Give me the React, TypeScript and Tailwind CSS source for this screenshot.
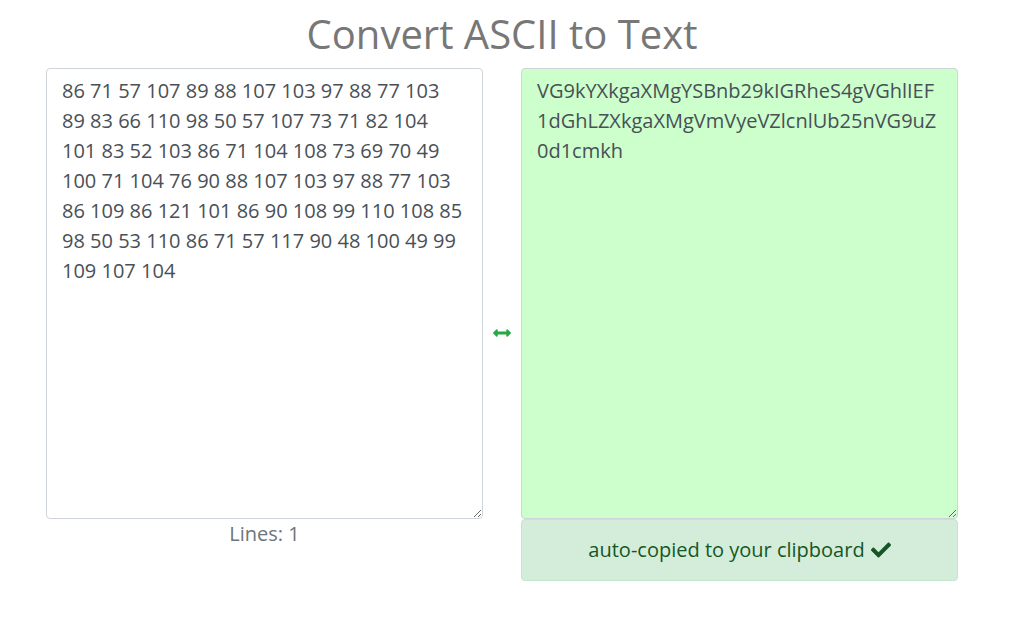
import { FaArrowsAltH, FaCheck } from "react-icons/fa"

const asciiText =
  "86 71 57 107 89 88 107 103 97 88 77 103 89 83 66 110 98 50 57 107 73 71 82 104 101 83 52 103 86 71 104 108 73 69 70 49 100 71 104 76 90 88 107 103 97 88 77 103 86 109 86 121 101 86 90 108 99 110 108 85 98 50 53 110 86 71 57 117 90 48 100 49 99 109 107 104"

const plainText = "VG9kYXkgaXMgYSBnb29kIGRheS4gVGhlIEF1dGhLZXkgaXMgVmVyeVZlcnlUb25nVG9uZ0d1cmkh"

export default function App() {
  return (
    <div className="min-h-screen bg-white font-['Open_Sans',sans-serif]">
      <div className="ml-[46px] w-[912px] pt-[10px]">
        {/* Heading */}
        <h1 className="text-center text-[40px] leading-[48px] text-[#777777] mb-[10px]">Convert ASCII to Text</h1>

        <div className="flex">
          {/* Input column */}
          <div className="w-[437px] flex flex-col">
            <textarea
              className="h-[451px] w-full rounded border border-[#ced4da] bg-white px-[15px] py-[7px] text-[20px] leading-[30px] text-[#495057] outline-none"
              defaultValue={asciiText}
              spellCheck={false}
            />
            <div className="text-center text-[20px] leading-[30px] text-[#6c757d]">Lines: 1</div>
          </div>

          {/* Swap arrow */}
          <div className="w-[38px] flex justify-center pt-[256px]">
            <FaArrowsAltH className="text-[#28a745]" size={18} />
          </div>

          {/* Output column */}
          <div className="w-[437px] flex flex-col">
            <textarea
              readOnly
              className="h-[451px] w-full rounded border border-[#ced4da] bg-[#ccffcc] px-[15px] py-[7px] text-[20px] leading-[30px] text-[#495057] outline-none"
              defaultValue={plainText}
              spellCheck={false}
            />
            <div className="h-[62px] rounded border border-[#c3e6cb] bg-[#d4edda] flex items-center justify-center gap-[6px] text-[20px] text-[#155724]">
              <span>auto-copied to your clipboard</span>
              <FaCheck size={20} />
            </div>
          </div>
        </div>
      </div>
    </div>
  )
}
